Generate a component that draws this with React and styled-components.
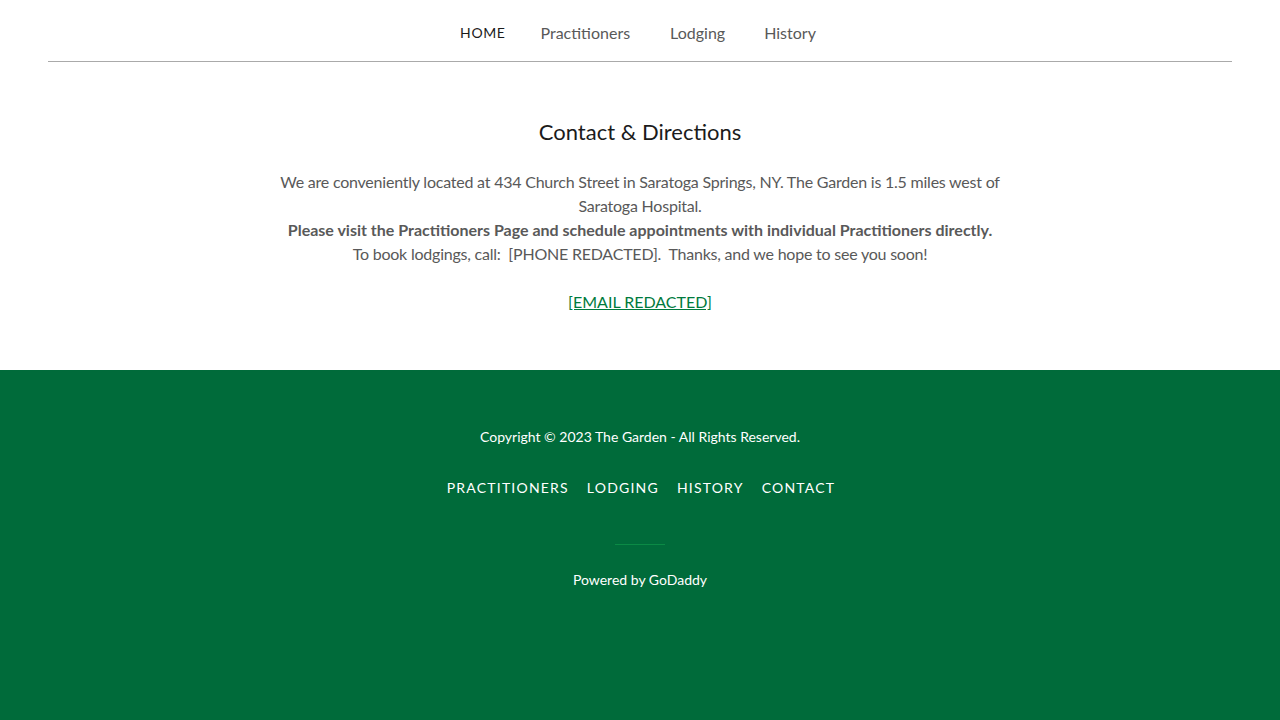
import styled, { createGlobalStyle } from "styled-components";

const GlobalStyle = createGlobalStyle`
  html, body {
    margin: 0;
    padding: 0;
    background: #fff;
    font-family: Lato, "Open Sans", Arial, sans-serif;
  }
  * { box-sizing: border-box; }
`;

const Page = styled.div`
  display: flex;
  flex-direction: column;
  min-height: 720px;
`;

const Header = styled.header`
  margin: 0 48px;
  border-bottom: 1px solid #aaaaaa;
  height: 62px;
  display: flex;
  justify-content: center;
  align-items: center;
`;

const Nav = styled.nav`
  display: flex;
  align-items: center;
  padding-top: 4px;
  margin-left: -4px;
`;

const NavLink = styled.a`
  font-size: ${(p) => (p.$active ? "14px" : "16px")};
  letter-spacing: ${(p) => (p.$active ? "0.6px" : "0")};
  text-transform: ${(p) => (p.$active ? "uppercase" : "none")};
  color: ${(p) => (p.$active ? "#1b1b1b" : "#595959")};
  text-decoration: none;
  margin-left: ${(p) => p.$gap || 0}px;
`;

const Main = styled.main`
  padding: 56px 0 56px;
  display: flex;
  flex-direction: column;
  align-items: center;
`;

const Title = styled.h2`
  margin: 0 0 24px;
  font-size: 22px;
  font-weight: 400;
  line-height: 28px;
  color: #1b1b1b;
`;

const Body = styled.div`
  width: 740px;
  text-align: center;
  font-size: 16px;
  line-height: 24px;
  color: #595959;
`;

const Para = styled.p`
  margin: 0;
  min-height: 24px;
  font-weight: ${(p) => (p.$bold ? 700 : 400)};
  letter-spacing: ${(p) => (p.$bold ? "0" : "-0.22px")};
`;

const Mail = styled.a`
  color: #007a3d;
  text-decoration: underline;
  letter-spacing: 0;
`;

const Footer = styled.footer`
  flex: 1;
  background: #006b3a;
  color: #ffffff;
  display: flex;
  flex-direction: column;
  align-items: center;
  padding-top: 56px;
`;

const Copy = styled.p`
  margin: 0;
  font-size: 14px;
  line-height: 22px;
`;

const FooterNav = styled.nav`
  display: flex;
  gap: 18px;
  margin-top: 29px;
  margin-left: 2px;
`;

const FooterLink = styled.a`
  font-size: 14px;
  letter-spacing: 1.2px;
  text-transform: uppercase;
  color: #ffffff;
  text-decoration: none;
  line-height: 22px;
`;

const Divider = styled.hr`
  width: 50px;
  border: 0;
  border-top: 1px solid #0b8a45;
  margin: 45px 0 24px;
`;

export default function App() {
  return (
    <Page>
      <GlobalStyle />
      <Header>
        <Nav>
          <NavLink $active href="#">Home</NavLink>
          <NavLink $gap={35} href="#">Practitioners</NavLink>
          <NavLink $gap={40} href="#">Lodging</NavLink>
          <NavLink $gap={39} href="#">History</NavLink>
        </Nav>
      </Header>

      <Main>
        <Title>Contact &amp; Directions</Title>
        <Body>
          <Para>
            We are conveniently located at 434 Church Street in Saratoga Springs, NY. The Garden is 1.5 miles west of Saratoga Hospital.
          </Para>
          <Para $bold>
            Please visit the Practitioners Page and schedule appointments with individual Practitioners directly.
          </Para>
          <Para>
            To book lodgings, call:&nbsp; [PHONE REDACTED].&nbsp; Thanks, and we hope to see you soon!
          </Para>
          <Para />
          <Para>
            <Mail href="#">[EMAIL REDACTED]</Mail>
          </Para>
        </Body>
      </Main>

      <Footer>
        <Copy>Copyright © 2023 The Garden - All Rights Reserved.</Copy>
        <FooterNav>
          <FooterLink href="#">Practitioners</FooterLink>
          <FooterLink href="#">Lodging</FooterLink>
          <FooterLink href="#">History</FooterLink>
          <FooterLink href="#">Contact</FooterLink>
        </FooterNav>
        <Divider />
        <Copy>Powered by GoDaddy</Copy>
      </Footer>
    </Page>
  );
}
